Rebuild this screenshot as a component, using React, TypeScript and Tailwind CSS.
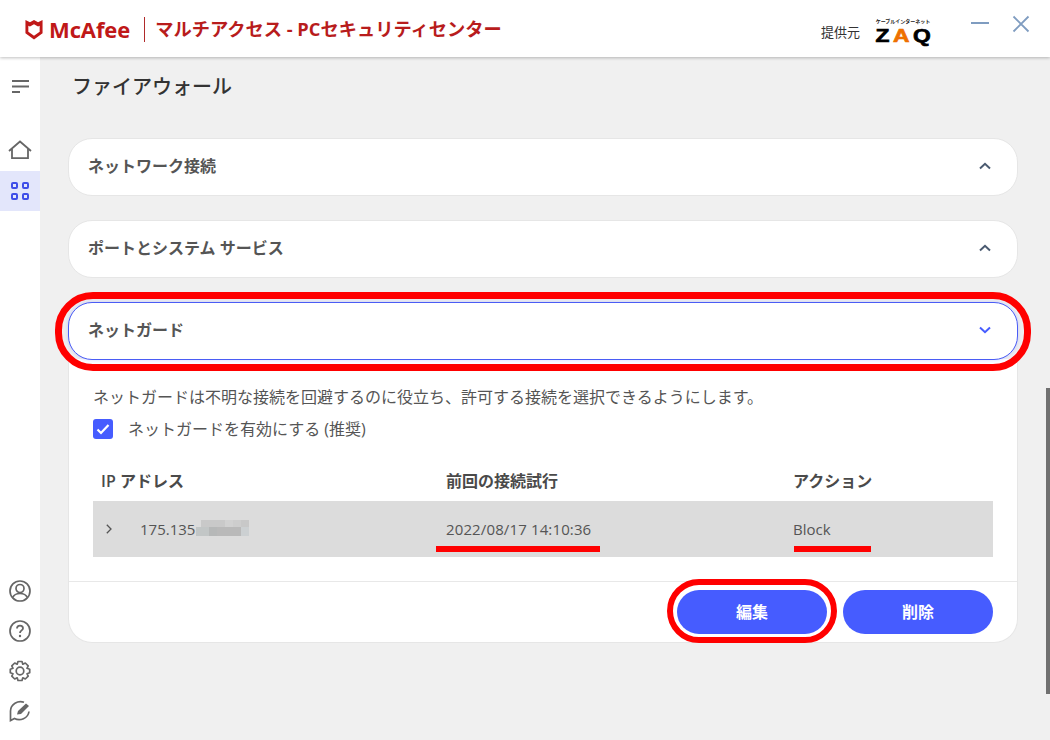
import React from "react";

const font = { fontFamily: '"Open Sans","Noto Sans CJK JP",sans-serif' };

function Shield() {
  return (
    <svg width="18" height="21" viewBox="0 0 20 22" preserveAspectRatio="none" className="shrink-0">
      <path fill="#c01818" fillRule="evenodd" d="M0.5 1 L5.5 3.5 L10 1 L14.5 3.5 L19.5 1 V15 L10 21.5 L0.5 15 Z M3.7 7 V13.3 L10 17.6 L16.3 13.3 V7 L14.5 7.9 L10 5.4 L5.5 7.9 Z" />
    </svg>
  );
}

function Chevron({ down = false, color = "#4a5a70" }: { down?: boolean; color?: string }) {
  return (
    <svg width="12" height="8" viewBox="0 0 12 8" fill="none" className="-translate-y-[1px]">
      <path d={down ? "M1 1.5 L6 6.2 L11 1.5" : "M1 6.5 L6 1.8 L11 6.5"} stroke={color} strokeWidth="2" />
    </svg>
  );
}

function Header() {
  return (
    <header className="relative z-10 flex h-[57px] shrink-0 items-center bg-white pl-[25px] pr-[20px] pt-[1px] shadow-[0_1px_3px_rgba(0,0,0,0.25)]">
      <Shield />
      <span className="ml-[6px] text-[22px] font-bold leading-none tracking-[-0.1px] text-[#c01818]">McAfee</span>
      <span className="ml-[14px] h-[25px] w-px bg-[#b02a2a]" />
      <span className="ml-[10px] text-[18.25px] font-bold text-[#b81c1c]">マルチアクセス - PCセキュリティセンター</span>
      <span className="ml-auto mt-[7px] text-[13px] text-[#333]">提供元</span>
      <div className="ml-[15px] mt-[4px] flex w-[56px] flex-col items-center">
        <span className="whitespace-nowrap text-[5px] font-bold leading-[6px] text-[#222]">ケーブルインターネット</span>
        <span className="mt-[3px] flex origin-center scale-x-[1.2] gap-[3px] text-[19px] font-bold leading-[17px] text-black [-webkit-text-stroke:0.7px_currentColor]" style={{ fontFamily: '"Liberation Sans",sans-serif' }}>
          <span>Z</span><span className="text-[#ee7000]">A</span><span>Q</span>
        </span>
      </div>
      <svg width="18" height="18" viewBox="0 0 18 18" className="ml-[40px] mb-[12px]" fill="none">
        <path d="M0 9 H18" stroke="#7f9cc0" strokeWidth="2" />
      </svg>
      <svg width="18" height="18" viewBox="0 0 18 18" className="ml-[23px] mb-[10px]" fill="none">
        <path d="M1.5 1.5 L16.5 16.5 M16.5 1.5 L1.5 16.5" stroke="#7f9cc0" strokeWidth="1.8" />
      </svg>
    </header>
  );
}

function Sidebar() {
  const s = "#666";
  return (
    <aside className="flex w-[40px] shrink-0 flex-col items-center bg-white">
      <svg width="18" height="16" viewBox="0 0 18 16" className="mt-[22px]" fill="none" stroke={s} strokeWidth="2">
        <path d="M1 2 H18 M1 7.5 H18 M1 13 H9" />
      </svg>
      <svg width="24" height="20" viewBox="0 0 24 20" className="mt-[45px]" fill="none" stroke={s} strokeWidth="1.8">
        <path d="M1 11 L12 1.5 L23 11" />
        <path d="M4 9 V18.2 H20 V9" />
      </svg>
      <div className="mt-[11px] flex h-[40px] w-full items-center justify-center bg-[#e3e6fb]">
        <svg width="20" height="20" viewBox="0 0 20 20" fill="none" stroke="#3f4ee8" strokeWidth="2">
          <rect x="2" y="2" width="5" height="5" rx="1" />
          <rect x="13" y="2" width="5" height="5" rx="1" />
          <rect x="2" y="13" width="5" height="5" rx="1" />
          <rect x="13" y="13" width="5" height="5" rx="1" />
        </svg>
      </div>
      <div className="mt-auto mb-[18px] flex flex-col items-center gap-[18px]">
        <svg width="22" height="22" viewBox="0 0 22 22" fill="none" stroke={s} strokeWidth="1.7">
          <circle cx="11" cy="11" r="10" />
          <circle cx="11" cy="8.5" r="4" />
          <path d="M3.8 17.5 C5 14.5 8 13.5 11 13.5 C14 13.5 17 14.5 18.2 17.5" />
        </svg>
        <svg width="22" height="22" viewBox="0 0 22 22" fill="none" stroke={s} strokeWidth="1.7">
          <circle cx="11" cy="11" r="10" />
          <path d="M8 8.5 C8 6.5 9.5 5.6 11 5.6 C12.8 5.6 14 6.8 14 8.2 C14 10.4 11 10.4 11 13" strokeWidth="1.8" />
          <circle cx="11" cy="16" r="1.2" fill={s} stroke="none" />
        </svg>
        <svg width="22" height="22" viewBox="0 0 22 22" fill="none" stroke={s} strokeWidth="1.7">
          <circle cx="11" cy="11" r="3.8" />
          <path d="M9 1.5 H13 L13.8 4.2 L16.3 3 L19.2 5.8 L18 8.3 L20.7 9.2 V12.8 L18 13.7 L19.2 16.2 L16.3 19 L13.8 17.8 L13 20.5 H9 L8.2 17.8 L5.7 19 L2.8 16.2 L4 13.7 L1.3 12.8 V9.2 L4 8.3 L2.8 5.8 L5.7 3 L8.2 4.2 Z" strokeLinejoin="round" />
        </svg>
        <svg width="22" height="22" viewBox="0 0 22 22" fill="none" stroke={s} strokeWidth="1.7">
          <path d="M15 2.2 C9 0 1.5 4 1.5 11 V20.5 L5.5 18.5 C11 21.5 19 18.5 20 11.5" />
          <path d="M8 14.5 L9 11 L17 3.5 L20 6 L12 14 Z" fill={s} stroke="none" />
        </svg>
      </div>
    </aside>
  );
}

function Collapsed({ title }: { title: string }) {
  return (
    <div className="flex h-[58px] items-center justify-between rounded-[24px] border border-[#e6e6e6] bg-white pl-[19px] pr-[26px]">
      <span className="pb-[3px] text-[16px] font-bold text-[#555]">{title}</span>
      <Chevron />
    </div>
  );
}

function Mosaic() {
  return (
    <span className="ml-[1px] flex h-[17px] w-[53px] -translate-y-[1px] flex-col">
      <span className="flex h-[7px] pl-[5px]">
        <span className="w-[24px] bg-[#c9c9c9]" />
        <span className="w-[8px] bg-[#d1d1d1]" />
        <span className="w-[8px] bg-[#cdcdcd]" />
        <span className="w-[8px] bg-[#c8c8c8]" />
      </span>
      <span className="flex h-[9px]">
        <span className="w-[13px] bg-[#c2c6c6]" />
        <span className="w-[8px] bg-[#b6b8b8]" />
        <span className="w-[24px] bg-[#b9b9b9]" />
        <span className="w-[8px] bg-[#ccd0d2]" />
      </span>
    </span>
  );
}

function Content() {
  return (
    <main className="relative flex-1 overflow-hidden bg-[#f0f0f0]">
      <div className="pl-[28px] pr-[32px]">
        <h1 className="pl-[4px] pt-[13px] text-[20px] font-medium leading-[34px] text-[#333]">ファイアウォール</h1>
        <div className="mt-[34px] flex flex-col gap-[24px]">
          <Collapsed title="ネットワーク接続" />
          <Collapsed title="ポートとシステム サービス" />
          <div>
            <div className="relative z-[1] flex h-[58px] items-center justify-between rounded-[24px] border border-[#4a5cf5] bg-white pl-[19px] pr-[26px] shadow-[0_0_4px_rgba(70,90,255,0.25)]">
              <span className="pb-[2px] text-[16px] font-bold text-[#555]">ネットガード</span>
              <Chevron down color="#465cff" />
            </div>
            <div className="-mt-[1px] rounded-b-[24px] border border-t-0 border-[#e6e6e6] bg-white">
              <div className="px-[24px]">
                <p className="pt-[27px] text-[16px] leading-[22px] text-[#555]">ネットガードは不明な接続を回避するのに役立ち、許可する接続を選択できるようにします。</p>
                <div className="mt-[10px] flex h-[22px] items-center">
                  <span className="flex h-[20px] w-[20px] items-center justify-center rounded-[3px] bg-[#465cff]">
                    <svg width="14" height="12" viewBox="0 0 14 12" fill="none">
                      <path d="M1.5 6.5 L5 10 L12.5 2" stroke="white" strokeWidth="2.2" />
                    </svg>
                  </span>
                  <span className="ml-[15px] text-[16px] text-[#555]">ネットガードを有効にする (推奨)</span>
                </div>
                <div className="mt-[26px] grid h-[35px] grid-cols-[345px_347px_1fr] items-center pb-[5px] pl-[8px] text-[16px] font-semibold text-[#4a4a4a]">
                  <span>IP アドレス</span>
                  <span>前回の接続試行</span>
                  <span>アクション</span>
                </div>
                <div className="grid h-[56px] grid-cols-[353px_347px_1fr] items-center bg-[#dcdcdc] text-[15px] text-[#555]">
                  <div className="flex items-center pl-[13px]">
                    <svg width="6" height="10" viewBox="0 0 6 10" fill="none">
                      <path d="M0.8 0.8 L5 5 L0.8 9.2" stroke="#555" strokeWidth="1.3" />
                    </svg>
                    <span className="ml-[28px]">175.135</span>
                    <Mosaic />
                  </div>
                  <span className="tracking-[0.13px]">2022/08/17 14:10:36</span>
                  <span>Block</span>
                </div>
              </div>
              <div className="mt-[24px] flex justify-end gap-[16px] border-t border-[#e8e8e8] px-[24px] pb-[8px] pt-[8px]">
                <button className="h-[44px] w-[150px] rounded-full bg-[#465cff] text-[16px] font-bold text-white">編集</button>
                <button className="h-[44px] w-[150px] rounded-full bg-[#465cff] text-[16px] font-bold text-white">削除</button>
              </div>
            </div>
          </div>
        </div>
      </div>
      {/* red annotations drawn over the screenshot */}
      <div className="absolute left-[15px] top-[235px] h-[79px] w-[976px] rounded-[38px] border-[7px] border-[#ff0000]" />
      <div className="absolute left-[627px] top-[522px] h-[64px] w-[170px] rounded-full border-[6px] border-[#ff0000]" />
      <div className="absolute left-[396px] top-[489px] h-[6px] w-[164px] bg-[#ff0000]" />
      <div className="absolute left-[754px] top-[489px] h-[6px] w-[77px] bg-[#ff0000]" />
      {/* scrollbar */}
      <div className="absolute right-0 top-[331px] h-[306px] w-[4px] bg-[#707070]" />
    </main>
  );
}

export default function App() {
  return (
    <div className="flex h-[740px] w-[1050px] flex-col overflow-hidden bg-white" style={font}>
      <Header />
      <div className="flex min-h-0 flex-1">
        <Sidebar />
        <Content />
      </div>
    </div>
  );
}
